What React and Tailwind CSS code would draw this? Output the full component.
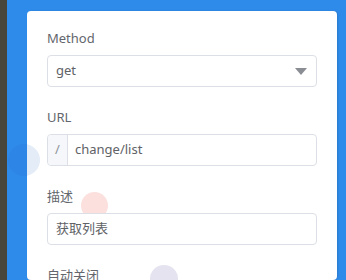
import React from "react";

const font = { fontFamily: '"Noto Sans", "Noto Sans CJK SC", sans-serif' };

function Field({ label, children }) {
  return (
    <div className="mb-[21px]">
      <div className="text-[13px] leading-[18px] text-[#63666c] mb-[8px]">{label}</div>
      {children}
    </div>
  );
}

export default function App() {
  return (
    <div className="relative w-[346px] h-[280px] overflow-hidden flex bg-[#2f8bea]" style={font}>
      <div className="w-[7px] h-full bg-[#48453b]" />
      <div className="flex-1 pl-[20px] pr-[9px] pt-[11px]">
        <div className="h-full bg-white rounded-[4px] pt-[18px] px-[20px] shadow-[1px_0_2px_rgba(0,0,0,0.12)]">
          <Field label="Method">
            <div className="relative z-10 flex items-center h-[32px] border border-[#dcdfe6] rounded-[4px] bg-white px-[8px] text-[13px] text-[#606266]">
              <span className="flex-1">get</span>
              <svg width="12" height="7" viewBox="0 0 12 7" className="mr-[1px]">
                <path d="M0 0h12L6 7z" fill="#8a8d94" />
              </svg>
            </div>
          </Field>
          <Field label="URL">
            <div className="relative z-10 flex h-[32px] border border-[#dcdfe6] rounded-[4px] bg-white text-[13px]">
              <div className="w-[20px] flex items-center justify-center bg-[#f5f7fa] border-r border-[#dcdfe6] rounded-l-[4px] text-[#909399]">/</div>
              <div className="flex items-center pl-[7px] text-[#606266]">change/list</div>
            </div>
          </Field>
          <Field label="描述">
            <div className="relative z-10 flex items-center h-[32px] border border-[#dcdfe6] rounded-[4px] bg-white px-[8px] text-[13px] text-[#606266]">
              获取列表
            </div>
          </Field>
          <div className="text-[13px] leading-[18px] text-[#63666c]">自动关闭</div>
        </div>
      </div>
      <div className="absolute left-[8px] top-[144px] w-[32px] h-[32px] rounded-full bg-[rgba(30,100,200,0.12)]" />
      <div className="absolute left-[81px] top-[192px] w-[27px] h-[27px] rounded-full bg-[#fbe0dd]" />
      <div className="absolute z-20 left-[150px] top-[265px] w-[28px] h-[28px] rounded-full bg-[#e4e3ef]" />
    </div>
  );
}
